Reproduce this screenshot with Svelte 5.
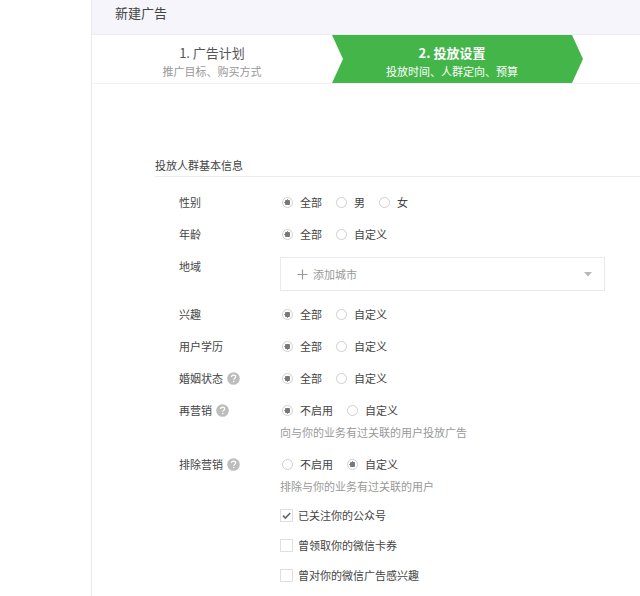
<script lang="ts">
    // 定向条件
    let rows = $state([
        {id: 'gender', label: '性别', options: ['全部', '男', '女'], value: '全部'},
        {id: 'age', label: '年龄', options: ['全部', '自定义'], value: '全部'},
        {id: 'area', label: '地域', select: true},
        {id: 'interest', label: '兴趣', options: ['全部', '自定义'], value: '全部'},
        {id: 'education', label: '用户学历', options: ['全部', '自定义'], value: '全部'},
        {id: 'marriage', label: '婚姻状态', help: true, options: ['全部', '自定义'], value: '全部'},
        {
            id: 'remarketing', label: '再营销', help: true, options: ['不启用', '自定义'], value: '不启用',
            hint: '向与你的业务有过关联的用户投放广告'
        },
        {
            id: 'exclude', label: '排除营销', help: true, options: ['不启用', '自定义'], value: '自定义',
            hint: '排除与你的业务有过关联的用户',
            checks: [
                {text: '已关注你的公众号', checked: true},
                {text: '曾领取你的微信卡券', checked: false},
                {text: '曾对你的微信广告感兴趣', checked: false},
            ]
        },
    ]);
</script>

<main class="panel">
    <header class="panel-header">
        <h1>新建广告</h1>
    </header>

    <ol class="steps">
        <li class="step">
            <strong>1. 广告计划</strong>
            <span>推广目标、购买方式</span>
        </li>
        <li class="step active" aria-current="step">
            <strong>2. 投放设置</strong>
            <span>投放时间、人群定向、预算</span>
        </li>
    </ol>

    <form class="section">
        <h2>投放人群基本信息</h2>

        {#each rows as row (row.id)}
            <div class="row">
                <div class="row-label">
                    {#if row.select}
                        <label for={row.id}>{row.label}</label>
                    {:else}
                        <span id="{row.id}-label">{row.label}</span>
                    {/if}
                    {#if row.help}
                        <svg class="help" viewBox="0 0 13 13" aria-hidden="true">
                            <circle cx="6.5" cy="6.5" r="6.3" fill="#bdbdbd"/>
                            <path d="M4.5 5.1c0-1.3.9-2 2.1-2s2 .7 2 1.8c0 1.4-1.9 1.5-1.9 2.9" fill="none"
                                  stroke="#fff" stroke-width="1.2"/>
                            <circle cx="6.7" cy="9.5" r=".8" fill="#fff"/>
                        </svg>
                    {/if}
                </div>

                <div class="row-field">
                    {#if row.select}
                        <div class="select-box">
                            <select id={row.id}>
                                <option>添加城市</option>
                            </select>
                            <svg class="plus" viewBox="0 0 11 11" aria-hidden="true">
                                <path d="M5.5 .5v10M.5 5.5h10" stroke="#999" stroke-width="1.2"/>
                            </svg>
                            <svg class="caret" viewBox="0 0 8 5" aria-hidden="true">
                                <path d="M0 0h8L4 4.6z" fill="#b8b8b8"/>
                            </svg>
                        </div>
                    {:else}
                        <div class="radios" role="radiogroup" aria-labelledby="{row.id}-label">
                            {#each row.options ?? [] as option}
                                <label>
                                    <input type="radio" name={row.id} value={option} bind:group={row.value}/>
                                    {option}
                                </label>
                            {/each}
                        </div>
                    {/if}

                    {#if row.hint}
                        <p class="hint">{row.hint}</p>
                    {/if}

                    {#if row.checks}
                        <div class="checks">
                            {#each row.checks as check}
                                <label>
                                    <span class="check-box">
                                        <input type="checkbox" bind:checked={check.checked}/>
                                        {#if check.checked}
                                            <svg viewBox="0 0 13 13" aria-hidden="true">
                                                <path d="M3 6.6l2.4 2.4 4.8-5" fill="none" stroke="#666"
                                                      stroke-width="1.6"/>
                                            </svg>
                                        {/if}
                                    </span>
                                    {check.text}
                                </label>
                            {/each}
                        </div>
                    {/if}
                </div>
            </div>
        {/each}
    </form>
</main>

<style>
    :global(body) {
        margin: 0;
        background: #fff;
    }

    .panel {
        box-sizing: border-box;
        min-height: 100vh;
        margin-left: 91px;
        border-left: 1px solid #e9e9ee;
        color: #444;
        font-family: "Noto Sans CJK SC", "Liberation Sans", sans-serif;
        font-size: 11px;
        line-height: 20px;
    }

    .panel-header {
        padding: 3px 23px 11px;
        background: #f5f5fb;
        border-bottom: 1px solid #ebebf1;
    }

    h1 {
        margin: 0;
        font-size: 13px;
        font-weight: normal;
    }

    .steps {
        display: grid;
        grid-template-columns: 240px 240px 1fr;
        margin: 0;
        padding: 0;
        list-style: none;
        border-bottom: 1px solid #f0f0f5;
    }

    .step {
        position: relative;
        display: flex;
        flex-direction: column;
        align-items: center;
        padding: 8px 0 4px;
        color: #999;
        line-height: 16px;
    }

    .step strong {
        color: #555;
        font-size: 13px;
        font-weight: normal;
        line-height: 20px;
    }

    .step.active {
        z-index: 0;
        color: #fff;
    }

    .step.active strong {
        color: #fff;
        font-weight: bold;
    }

    /* 绿色箭头背景 */
    .step.active::before {
        content: "";
        position: absolute;
        z-index: -1;
        inset: 0 -11px 0 0;
        background: #44b549;
        clip-path: polygon(0 0, calc(100% - 11px) 0, 100% 50%, calc(100% - 11px) 100%, 0 100%, 11px 50%);
    }

    .section {
        margin: 71px 0 0 63px;
    }

    h2 {
        margin: 0 0 9px;
        padding-bottom: 1px;
        border-bottom: 1px solid #ebebf2;
        font-size: 11px;
        font-weight: normal;
    }

    .row {
        display: grid;
        grid-template-columns: 101px 1fr;
        padding: 6px 35px 6px 24px;
    }

    .row-label {
        display: flex;
        align-items: center;
        gap: 4px;
        height: 20px;
    }

    .help {
        width: 13px;
        height: 13px;
    }

    .radios {
        display: flex;
        gap: 14px;
        padding-left: 2px;
    }

    .radios label {
        display: flex;
        align-items: center;
        gap: 7px;
    }

    input {
        appearance: none;
        box-sizing: border-box;
        margin: 0;
        border: 1px solid #d0d0d0;
        background: #fff;
    }

    input[type="radio"] {
        width: 11px;
        height: 11px;
        border-radius: 50%;
    }

    input[type="radio"]:checked {
        background: radial-gradient(circle, #777 2px, #999 3px, #fff 3px);
    }

    .hint {
        margin: 2px 0 0;
        color: #999;
    }

    .checks {
        display: flex;
        flex-direction: column;
        gap: 10px;
        margin-top: 9px;
    }

    .checks label {
        display: flex;
        align-items: center;
        gap: 5px;
    }

    .check-box {
        display: grid;
    }

    .check-box input,
    .check-box svg {
        grid-area: 1 / 1;
        width: 13px;
        height: 13px;
    }

    .check-box input {
        border-color: #dedee3;
    }

    .check-box svg {
        pointer-events: none;
    }

    .select-box {
        position: relative;
        margin: 1px 0;
    }

    select {
        appearance: none;
        display: block;
        box-sizing: border-box;
        width: 100%;
        height: 34px;
        padding: 0 32px;
        border: 1px solid #e9e9f0;
        border-radius: 0;
        background: #fff;
        color: #999;
        font: inherit;
    }

    .plus,
    .caret {
        position: absolute;
        top: 0;
        bottom: 0;
        margin: auto 0;
        pointer-events: none;
    }

    .plus {
        left: 17px;
        width: 11px;
        height: 11px;
    }

    .caret {
        right: 13px;
        width: 8px;
        height: 5px;
    }
</style>
